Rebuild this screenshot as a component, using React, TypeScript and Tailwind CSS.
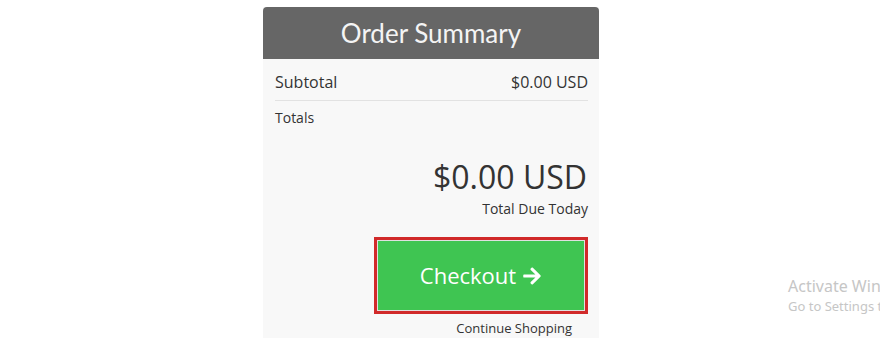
export default function App() {
  return (
    <div
      className="relative h-[338px] w-[880px] overflow-hidden bg-white"
      style={{ fontFamily: '"Open Sans", "Liberation Sans", sans-serif' }}
    >
      <div className="ml-[263px] mt-[7px] flex h-[331px] w-[336px] flex-col bg-[#f8f8f8]">
        <div
          className="flex h-[52px] items-center justify-center rounded-t-[4px] bg-[#666666] text-[26px] text-[#f4f4f4]"
          style={{ fontFamily: 'Lato, "Open Sans", sans-serif' }}
        >
          Order Summary
        </div>
        <div className="flex flex-col pl-[12px] pr-[11px]">
          <div className="flex h-[42px] items-center justify-between border-b border-[#e2e2e2] pt-[4px] text-[16px] text-[#333333]">
            <span>Subtotal</span>
            <span>$0.00 USD</span>
          </div>
          <div className="pt-[7px] text-[14px] leading-[20px] text-[#333333]">Totals</div>
          <div className="mt-[29px] pr-[1px] text-right text-[32px] leading-[40px] text-[#333333]">
            $0.00 USD
          </div>
          <div className="mt-[2px] text-right text-[14px] leading-[20px] text-[#333333]">
            Total Due Today
          </div>
          <div className="mt-[18px] flex justify-end">
            <div className="border-[3px] border-[#d12a2a] bg-[#e0e0e0] p-px">
              <button className="flex h-[69px] w-[206px] items-center justify-center gap-[6px] bg-[#3fc552] text-[22px] text-white">
                Checkout
                <svg width="20" height="20" viewBox="0 0 448 512" fill="currentColor">
                  <path d="M190.5 66.9l22.2-22.2c9.4-9.4 24.6-9.4 33.9 0L441 239c9.4 9.4 9.4 24.6 0 33.9L246.6 467.3c-9.4 9.4-24.6 9.4-33.9 0l-22.2-22.2c-9.5-9.5-9.3-25 .4-34.3L311.4 296H24c-13.3 0-24-10.7-24-24v-32c0-13.3 10.7-24 24-24h287.4L190.9 101.2c-9.8-9.3-10-24.8-.4-34.3z" />
                </svg>
              </button>
            </div>
          </div>
          <div className="mt-[5px] pr-[16px] text-right text-[13px] leading-[18px] text-[#333333]">
            Continue Shopping
          </div>
        </div>
      </div>
      <div
        className="absolute left-[788px] top-[275px] whitespace-nowrap text-[#c6c6c6]"
        style={{ fontFamily: '"Noto Sans", "Open Sans", sans-serif' }}
      >
        <div className="text-[16px] leading-[22px]">Activate Windows</div>
        <div className="text-[13px] leading-[18px]">Go to Settings to activate Windows.</div>
      </div>
    </div>
  );
}
